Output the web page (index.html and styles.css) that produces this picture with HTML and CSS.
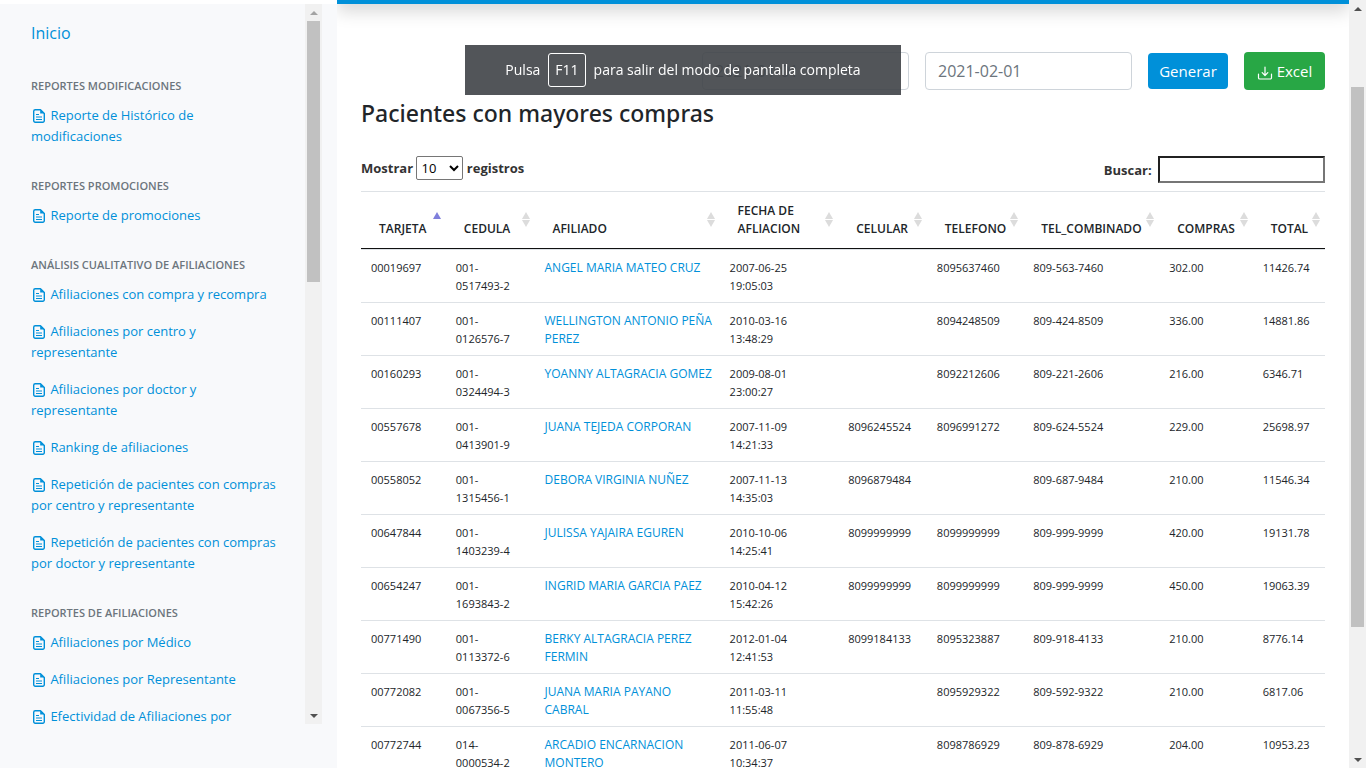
FILE: index.html
```html
<!DOCTYPE html>
<html lang="es">
<head>
<meta charset="utf-8">
<meta name="viewport" content="width=device-width, initial-scale=1">
<title>Pacientes con mayores compras</title>
<link rel="stylesheet" href="styles.css">
</head>
<body>
<svg class="defs" aria-hidden="true">
  <symbol id="doc" viewBox="0 0 16 16">
    <path d="M9.5 1.7H4.200a1.500 1.500 0 0 0-1.500 1.500v9.600a1.500 1.500 0 0 0 1.500 1.500h7.600a1.500 1.500 0 0 0 1.500-1.500V5.500z" fill="none" stroke="currentColor" stroke-width="1.400" stroke-linejoin="round"/>
    <path d="M9.200 1.700v3.900h4z" fill="currentColor"/>
    <path d="M5 6.500h3M5 9h6M5 11.500h6" fill="none" stroke="currentColor" stroke-width="1.100"/>
  </symbol>
  <symbol id="download" viewBox="0 0 16 16">
    <path d="M1.500 9v3.700a1.300 1.300 0 0 0 1.300 1.300h10.400a1.300 1.300 0 0 0 1.300-1.300V9M8 2v8.300M5.200 7.700L8 10.500l2.800-2.800" fill="none" stroke="currentColor" stroke-width="1.200" stroke-linecap="round" stroke-linejoin="round"/>
  </symbol>
</svg>
<div class="app">
  <aside class="sidebar">
    <div class="sidebar-scroll">
      <nav class="menu">
        <a class="home" href="#">Inicio</a>
        <h6>Reportes modificaciones</h6>
        <a href="#"><svg class="icon"><use href="#doc"/></svg> Reporte de Histórico de<br>modificaciones</a>
        <h6>Reportes promociones</h6>
        <a href="#"><svg class="icon"><use href="#doc"/></svg> Reporte de promociones</a>
        <h6>Análisis cualitativo de afiliaciones</h6>
        <a href="#"><svg class="icon"><use href="#doc"/></svg> Afiliaciones con compra y recompra</a>
        <a href="#"><svg class="icon"><use href="#doc"/></svg> Afiliaciones por centro y<br>representante</a>
        <a href="#"><svg class="icon"><use href="#doc"/></svg> Afiliaciones por doctor y<br>representante</a>
        <a href="#"><svg class="icon"><use href="#doc"/></svg> Ranking de afiliaciones</a>
        <a href="#"><svg class="icon"><use href="#doc"/></svg> Repetición de pacientes con compras por centro y representante</a>
        <a href="#"><svg class="icon"><use href="#doc"/></svg> Repetición de pacientes con compras por doctor y representante</a>
        <h6>Reportes de afiliaciones</h6>
        <a href="#"><svg class="icon"><use href="#doc"/></svg> Afiliaciones por Médico</a>
        <a href="#"><svg class="icon"><use href="#doc"/></svg> Afiliaciones por Representante</a>
        <a href="#"><svg class="icon"><use href="#doc"/></svg> Efectividad de Afiliaciones por<br>Representante</a>
      </nav>
      <div class="scrollbar at-start" aria-hidden="true"><i class="up"></i><span class="track"><b class="thumb side-thumb"></b></span><i class="down"></i></div>
    </div>
  </aside>
  <main class="main">
    <header class="topbar"></header>
    <div class="content">
      <form class="filters">
        <input type="text" aria-label="Fecha desde" value="2021-01-01">
        <input type="text" aria-label="Fecha hasta" value="2021-02-01">
        <button class="btn primary" type="button">Generar</button>
        <button class="btn success" type="button"><svg class="icon"><use href="#download"/></svg> Excel</button>
      </form>
      <h1>Pacientes con mayores compras</h1>
      <div class="tools">
        <label>Mostrar <select><option>10</option><option>25</option><option>50</option></select> registros</label>
        <label>Buscar: <input class="search" type="search"></label>
      </div>
      <table class="data">
        <colgroup><col class="c-card"><col class="c-id"><col class="c-name"><col class="c-date"><col class="c-cell"><col class="c-phone"><col class="c-both"><col class="c-count"><col class="c-total"></colgroup>
        <thead><tr><th class="asc">TARJETA</th><th>CEDULA</th><th>AFILIADO</th><th>FECHA DE AFLIACION</th><th>CELULAR</th><th>TELEFONO</th><th>TEL_COMBINADO</th><th>COMPRAS</th><th>TOTAL</th></tr></thead>
        <tbody>
          <tr><td>00019697</td><td>001-<br>0517493-2</td><td><a href="#">ANGEL MARIA MATEO CRUZ</a></td><td>2007-06-25 19:05:03</td><td></td><td>8095637460</td><td>809-563-7460</td><td>302.00</td><td>11426.74</td></tr>
          <tr><td>00111407</td><td>001-<br>0126576-7</td><td><a href="#">WELLINGTON ANTONIO PEÑA PEREZ</a></td><td>2010-03-16 13:48:29</td><td></td><td>8094248509</td><td>809-424-8509</td><td>336.00</td><td>14881.86</td></tr>
          <tr><td>00160293</td><td>001-<br>0324494-3</td><td><a href="#">YOANNY ALTAGRACIA GOMEZ</a></td><td>2009-08-01 23:00:27</td><td></td><td>8092212606</td><td>809-221-2606</td><td>216.00</td><td>6346.71</td></tr>
          <tr><td>00557678</td><td>001-<br>0413901-9</td><td><a href="#">JUANA TEJEDA CORPORAN</a></td><td>2007-11-09 14:21:33</td><td>8096245524</td><td>8096991272</td><td>809-624-5524</td><td>229.00</td><td>25698.97</td></tr>
          <tr><td>00558052</td><td>001-<br>1315456-1</td><td><a href="#">DEBORA VIRGINIA NUÑEZ</a></td><td>2007-11-13 14:35:03</td><td>8096879484</td><td></td><td>809-687-9484</td><td>210.00</td><td>11546.34</td></tr>
          <tr><td>00647844</td><td>001-<br>1403239-4</td><td><a href="#">JULISSA YAJAIRA EGUREN</a></td><td>2010-10-06 14:25:41</td><td>8099999999</td><td>8099999999</td><td>809-999-9999</td><td>420.00</td><td>19131.78</td></tr>
          <tr><td>00654247</td><td>001-<br>1693843-2</td><td><a href="#">INGRID MARIA GARCIA PAEZ</a></td><td>2010-04-12 15:42:26</td><td>8099999999</td><td>8099999999</td><td>809-999-9999</td><td>450.00</td><td>19063.39</td></tr>
          <tr><td>00771490</td><td>001-<br>0113372-6</td><td><a href="#">BERKY ALTAGRACIA PEREZ FERMIN</a></td><td>2012-01-04 12:41:53</td><td>8099184133</td><td>8095323887</td><td>809-918-4133</td><td>210.00</td><td>8776.14</td></tr>
          <tr><td>00772082</td><td>001-<br>0067356-5</td><td><a href="#">JUANA MARIA PAYANO<br>CABRAL</a></td><td>2011-03-11 11:55:48</td><td></td><td>8095929322</td><td>809-592-9322</td><td>210.00</td><td>6817.06</td></tr>
          <tr><td>00772744</td><td>014-<br>0000534-2</td><td><a href="#">ARCADIO ENCARNACION MONTERO</a></td><td>2011-06-07 10:34:37</td><td></td><td>8098786929</td><td>809-878-6929</td><td>204.00</td><td>10953.23</td></tr>
        </tbody>
      </table>
    </div>
  </main>
  <div class="scrollbar" aria-hidden="true"><i class="up"></i><span class="track"><b class="thumb page-thumb"></b></span><i class="down"></i></div>
</div>
<div class="toast" role="status">Pulsa <kbd>F11</kbd> para salir del modo de pantalla completa</div>
</body>
</html>
```
FILE: styles.css
```css
* { box-sizing: border-box; }
body {
  margin: 0;
  height: 100vh;
  overflow: hidden;
  background: #fff;
  color: #212529;
  font: 15px/24px "Segoe UI", "Open Sans", "Noto Sans", sans-serif;
}
a { color: #0090d9; text-decoration: none; }
.defs { position: absolute; width: 0; height: 0; }
.icon { width: 16px; height: 16px; vertical-align: -4px; }
.app { display: flex; height: 100%; }

/* Sidebar */
.sidebar {
  flex: 0 0 337px;
  border-top: 4px solid #fff;
  padding: 0 15px 44px 0;
  background: #f8f9fb;
}
.sidebar-scroll { display: flex; height: 100%; overflow: hidden; }
.menu { flex: 1; min-width: 0; padding: 9px 0 0 15px; }
.menu a { display: block; padding: 8px 16px; font-size: 13px; line-height: 21px; }
.menu a.home { padding-bottom: 10px; font-size: 16px; line-height: 24px; }
.menu h6 {
  margin: 22px 0 2px;
  padding-left: 16px;
  color: #6c757d;
  font-size: 11px;
  font-weight: 600;
  line-height: 18px;
  text-transform: uppercase;
  white-space: nowrap;
}

/* Scrollbars */
.scrollbar { flex: 0 0 17px; display: flex; flex-direction: column; background: #f1f1f1; }
.scrollbar i { flex: 0 0 17px; display: grid; place-items: center; }
.scrollbar i::before { content: ""; border: 4px solid transparent; }
.scrollbar .up::before { border-top: 0; border-bottom-color: #505050; }
.scrollbar .down::before { border-bottom: 0; border-top-color: #505050; }
.scrollbar.at-start .up::before { border-bottom-color: #a3a3a3; }
.track { flex: 1; padding: 0 2px; }
.thumb { display: block; background: #c1c1c1; }
.side-thumb { height: 38%; }
.page-thumb { height: 73.6%; margin-top: 70px; }

/* Main area */
.main { flex: 1; min-width: 0; overflow: hidden; }
.topbar {
  height: 56px;
  margin-top: -52px;
  background: #0090d9;
  box-shadow: 0 8px 16px rgba(0, 0, 0, .15);
}
.content { padding: 48px 24px 0; }
.filters { display: flex; justify-content: flex-end; align-items: center; gap: 16px; }
.filters input {
  width: 207px;
  height: 38px;
  padding: 6px 12px;
  border: 1px solid #ced4da;
  border-radius: 4px;
  color: #6c757d;
  font: inherit;
  font-size: 16px;
}
.btn { height: 36px; border: 0; border-radius: 4px; color: #fff; font: inherit; white-space: nowrap; }
.primary { width: 80px; background: #0090d9; }
.success { width: 81px; height: 38px; background: #28a745; }
h1 {
  margin: 9px 0 28px;
  font-family: "Segoe UI", "Noto Sans", sans-serif;
  font-size: 23px;
  font-weight: 500;
  line-height: 29px;
}
.tools {
  display: flex;
  justify-content: space-between;
  padding-bottom: 8px;
  color: #333;
  font-size: 13px;
  font-weight: 700;
}
.tools select {
  width: 47px;
  height: 24px;
  border: 1px solid #767676;
  border-radius: 2px;
  background: #fff;
  color: #000;
  font: inherit;
  font-weight: 400;
}
.search {
  width: 167px;
  height: 27px;
  margin-left: 3px;
  border: 2px inset #767676;
  background: #fff;
  font: inherit;
}

/* Data table */
.data {
  width: 100%;
  table-layout: fixed;
  border-collapse: separate;
  border-spacing: 0;
  font-size: 11px;
  line-height: 18px;
}
.c-card { width: 8.8%; }
.c-id { width: 9.2%; }
.c-name { width: 19.2%; }
.c-date { width: 12.3%; }
.c-cell { width: 9.2%; }
.c-phone { width: 10%; }
.c-both { width: 14.1%; }
.c-count { width: 9.7%; }
.c-total { width: 7.5%; }
.data th {
  position: relative;
  padding: 10px 0 10px 18px;
  border-top: 1px solid #dee2e6;
  border-bottom: 1px solid #111;
  font-size: 12px;
  font-weight: 600;
  text-align: left;
  vertical-align: bottom;
}
.data th:nth-child(4) { padding-right: 30px; }
.data td { padding: 9px 0 7px 10px; border-top: 1px solid #dee2e6; vertical-align: top; }
.data td a { display: block; font-size: 12px; }
.data td:nth-child(4) { padding-right: 40px; }
.data th::before, .data th::after {
  content: "";
  position: absolute;
  right: 5px;
  border: 4px solid transparent;
}
.data th::before { top: 20px; border-top: 0; border-bottom: 7px solid #dcdcdc; }
.data th::after { top: 28px; border-bottom: 0; border-top: 7px solid #dcdcdc; }
.data th.asc::before { border-bottom-color: #7f7fdc; }
.data th.asc::after { content: none; }

/* Fullscreen notice */
.toast {
  position: fixed;
  top: 45px;
  left: 0;
  right: 0;
  width: 436px;
  height: 50px;
  margin: 0 auto;
  display: flex;
  align-items: center;
  justify-content: center;
  gap: 8px;
  background: rgba(63, 66, 71, .9);
  color: #fff;
  font-size: 14px;
  white-space: nowrap;
}
.toast kbd { padding: 4px 6px; border: 1px solid #fff; border-radius: 3px; font: inherit; }
```
